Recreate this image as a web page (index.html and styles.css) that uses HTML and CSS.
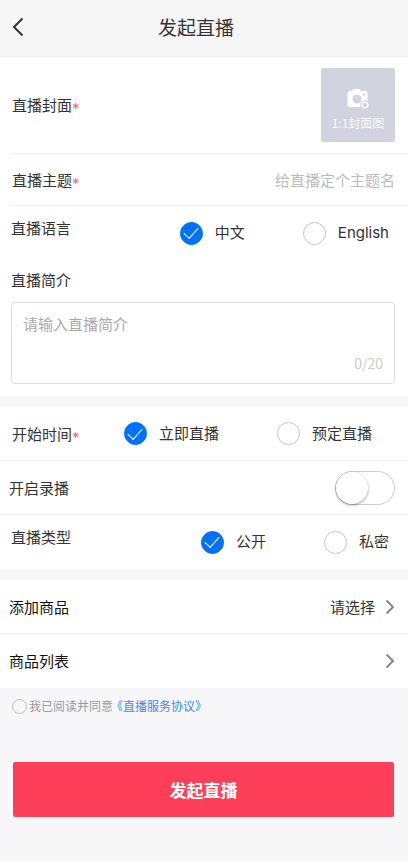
FILE: index.html
```html
<!DOCTYPE html>
<html lang="zh-CN">
<head>
<meta charset="utf-8">
<meta name="viewport" content="width=device-width, initial-scale=1">
<title>发起直播</title>
<link rel="stylesheet" href="styles.css">
</head>
<body>
<header class="topbar">
  <button class="back" type="button" aria-label="返回">
    <svg width="12" height="20" viewBox="0 0 12 20" fill="none" stroke="#333" stroke-width="2"><path d="M10.500 1.500 2 10l8.500 8.500"/></svg>
  </button>
  <h1 class="title">发起直播</h1>
</header>
<form class="form">
  <section class="panel">
    <div class="row row-cover">
      <span class="label">直播封面<span class="required">*</span></span>
      <button class="cover" type="button">
        <svg width="23" height="22" viewBox="0 0 23 22">
          <path fill="#fff" d="M2.500 3H5l1.500-2h6L14 3h4.500A2 2 0 0 1 20.500 5V17a2 2 0 0 1-2 2h-16A2 2 0 0 1 .5 17V5A2 2 0 0 1 2.500 3z"/>
          <circle cx="10" cy="11" r="4.500" fill="#d1d3df"/>
          <circle cx="17" cy="6.500" r="1.200" fill="#d1d3df"/>
          <circle cx="18" cy="17" r="4.200" fill="#fff" stroke="#d1d3df" stroke-width="1.300"/>
          <path d="M18 14.800v4.400M15.800 17h4.400" stroke="#b9bccd" stroke-width="1.200"/>
        </svg>
        <span>1:1封面图</span>
      </button>
    </div>
    <div class="row row-theme">
      <label class="label" for="theme">直播主题<span class="required">*</span></label>
      <input class="text-input" id="theme" type="text" placeholder="给直播定个主题名">
    </div>
    <div class="row row-options" role="radiogroup" aria-labelledby="lang-label">
      <span class="label label-raised" id="lang-label">直播语言</span>
      <div class="options">
        <label class="option"><input type="radio" name="lang" checked>中文</label>
        <label class="option"><input type="radio" name="lang">English</label>
      </div>
    </div>
    <div class="intro">
      <label class="label" for="intro">直播简介</label>
      <div class="intro-box">
        <textarea id="intro" rows="1" maxlength="20" placeholder="请输入直播简介"></textarea>
        <span class="counter">0/20</span>
      </div>
    </div>
  </section>
  <section class="panel">
    <div class="row row-start" role="radiogroup" aria-labelledby="start-label">
      <span class="label" id="start-label">开始时间<span class="required">*</span></span>
      <div class="options">
        <label class="option"><input type="radio" name="start" checked>立即直播</label>
        <label class="option"><input type="radio" name="start">预定直播</label>
      </div>
    </div>
    <div class="row row-wide">
      <label class="label" for="record">开启录播</label>
      <input class="switch" id="record" type="checkbox" role="switch">
    </div>
    <div class="row row-options" role="radiogroup" aria-labelledby="type-label">
      <span class="label label-raised" id="type-label">直播类型</span>
      <div class="options">
        <label class="option"><input type="radio" name="type" checked>公开</label>
        <label class="option"><input type="radio" name="type">私密</label>
      </div>
    </div>
  </section>
  <section class="panel">
    <button class="row row-wide row-link" type="button">
      <span class="label strong">添加商品</span>
      <span class="value">请选择
        <svg class="chevron" width="10" height="16" viewBox="0 0 10 16"><path d="M1.500 1.500 8 8l-6.500 6.500"/></svg>
      </span>
    </button>
    <button class="row row-wide row-link" type="button">
      <span class="label strong">商品列表</span>
      <svg class="chevron" width="10" height="16" viewBox="0 0 10 16"><path d="M1.500 1.500 8 8l-6.500 6.500"/></svg>
    </button>
  </section>
  <div class="agree">
    <input id="agree" type="checkbox">
    <label for="agree">我已阅读并同意</label><a href="#agreement">《直播服务协议》</a>
  </div>
  <button class="submit" type="submit">发起直播</button>
</form>
</body>
</html>
```
FILE: styles.css
```css
* {
  box-sizing: border-box;
}

body {
  margin: 0;
  min-height: 100vh;
  background: #f7f7fa;
  color: #333;
  font: 15px/22px "Noto Sans CJK SC", "Noto Sans", sans-serif;
}

button,
input,
textarea {
  margin: 0;
  padding: 0;
  border: 0;
  background: none;
  color: inherit;
  font: inherit;
}

.topbar {
  display: flex;
  align-items: center;
  height: 57px;
  padding: 0 40px 2px 12px;
  border-bottom: 1px solid #eee;
  background: #f6f6f6;
}

.back {
  display: flex;
  width: 12px;
}

.title {
  flex: 1;
  margin: 0;
  font-size: 19px;
  font-weight: 400;
  line-height: 28px;
  text-align: center;
}

.form {
  display: flex;
  flex-direction: column;
}

.panel {
  background: #fff;
}

.panel + .panel {
  margin-top: 11px;
}

.row {
  display: flex;
  align-items: center;
  justify-content: space-between;
  min-height: 54px;
}

.row-cover {
  min-height: 97px;
  margin-left: 12px;
  padding-right: 13px;
  border-bottom: 1px solid #eee;
}

.row-theme {
  min-height: 52px;
  margin-left: 12px;
  padding-right: 13px;
  border-bottom: 1px solid #eee;
}

.row-options {
  padding: 0 19px 0 11px;
}

.row-start {
  padding: 0 36px 0 12px;
}

.row-start,
.row-wide:not(:last-child) {
  border-bottom: 1px solid #eee;
}

.row-wide {
  padding: 0 13px 0 9px;
}

.row-link {
  width: 100%;
}

.required {
  color: #f56c6c;
  font-family: Inter, sans-serif;
  line-height: 1;
  vertical-align: -3px;
}

.label-raised {
  padding-bottom: 10px;
}

.strong {
  color: #111;
}

.cover {
  display: flex;
  flex-direction: column;
  align-items: center;
  gap: 4px;
  width: 74px;
  height: 74px;
  padding-top: 20px;
  border-radius: 2px;
  background: #d1d3df;
  color: #f8f8fb;
  font-size: 12px;
  line-height: 18px;
}

.text-input {
  flex: 1;
  min-width: 0;
  text-align: right;
}

.text-input::placeholder {
  color: #bbb;
}

.options {
  display: flex;
  gap: 58px;
}

.option {
  display: flex;
  align-items: center;
  gap: 12px;
  font-family: Inter, "Noto Sans CJK SC", sans-serif;
}

.option input {
  display: grid;
  place-items: center;
  width: 23px;
  height: 23px;
  border: 1px solid #c4c4c4;
  border-radius: 50%;
  appearance: none;
}

.option input:checked {
  border-color: #0070ff;
  background: #0070ff;
}

.option input:checked::after {
  content: "";
  width: 7px;
  height: 13px;
  margin-bottom: 4px;
  border: solid #fff;
  border-width: 0 1px 1px 0;
  transform: rotate(42deg);
}

.intro {
  padding: 9px 13px 12px 11px;
}

.intro-box {
  display: flex;
  flex-direction: column;
  height: 82px;
  margin-top: 11px;
  padding: 10px 11px;
  border: 1px solid #ddd;
  border-radius: 4px;
}

.intro-box textarea {
  flex: 1;
  resize: none;
}

.intro-box textarea::placeholder {
  color: #aaa;
}

.counter {
  color: #ccc;
  font-size: 14px;
  line-height: 20px;
  text-align: right;
}

.switch {
  width: 60px;
  height: 34px;
  border: 1px solid #ccc;
  border-radius: 17px;
  appearance: none;
}

.switch::before {
  content: "";
  display: block;
  width: 32px;
  height: 32px;
  border-radius: 50%;
  background: #fff;
  box-shadow: 0 1px 3px rgba(0, 0, 0, 0.4);
}

.switch:checked {
  background: #0070ff;
}

.switch:checked::before {
  margin-left: auto;
}

.value {
  display: flex;
  align-items: center;
  gap: 10px;
}

.chevron {
  fill: none;
  stroke: #888;
  stroke-width: 2;
}

.agree {
  display: flex;
  align-items: center;
  gap: 2px;
  padding: 9px 12px;
  color: #999;
  font-size: 12px;
  line-height: 18px;
}

.agree input {
  width: 15px;
  height: 15px;
  border: 1px solid #bbb;
  border-radius: 50%;
  appearance: none;
}

.agree input:checked {
  background: #0070ff;
}

.agree a {
  margin-left: -4px;
  color: #3d86f0;
  text-decoration: none;
}

.submit {
  height: 55px;
  margin: 38px 14px 44px 13px;
  border-radius: 2px;
  background: #fd3f59;
  color: #fff;
  font-size: 17px;
  font-weight: 700;
}
```
